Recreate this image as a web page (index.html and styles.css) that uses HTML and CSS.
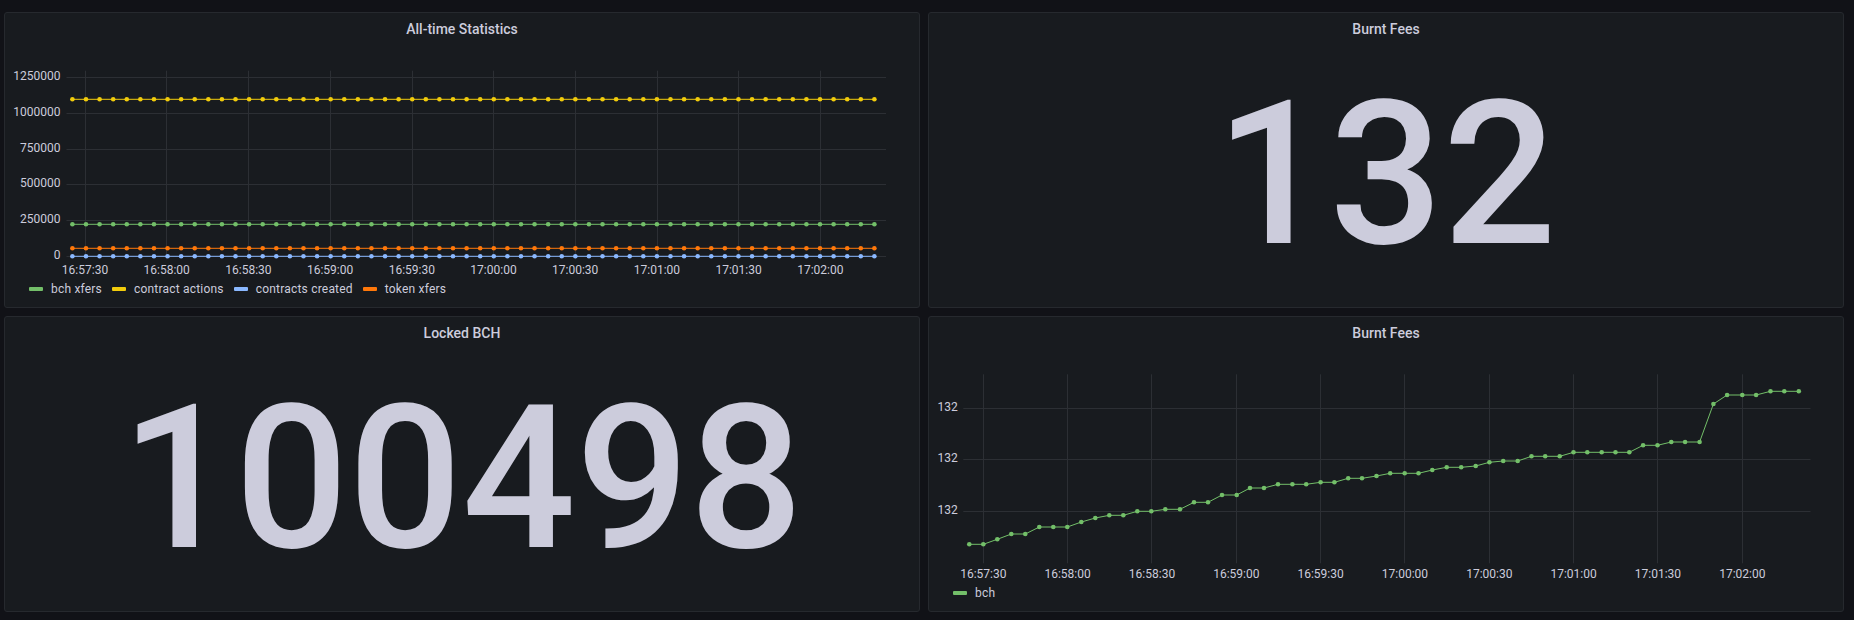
FILE: index.html
```html
<!DOCTYPE html>
<html lang="en">
<head>
<meta charset="utf-8">
<title>Dashboard</title>
<link rel="stylesheet" href="styles.css">
</head>
<body>
<main class="dashboard">

  <section class="panel">
    <header class="panel-title">All-time Statistics</header>
    <svg class="chart" width="914" height="235" viewBox="5 45 914 235" xmlns="http://www.w3.org/2000/svg">
      <defs>
        <marker id="m-green" markerUnits="userSpaceOnUse" markerWidth="6" markerHeight="6" refX="3" refY="3" viewBox="0 0 6 6"><circle cx="3" cy="3" r="2.3" fill="#73bf69"/></marker>
        <marker id="m-yellow" markerUnits="userSpaceOnUse" markerWidth="6" markerHeight="6" refX="3" refY="3" viewBox="0 0 6 6"><circle cx="3" cy="3" r="2.3" fill="#f2cc0c"/></marker>
        <marker id="m-blue" markerUnits="userSpaceOnUse" markerWidth="6" markerHeight="6" refX="3" refY="3" viewBox="0 0 6 6"><circle cx="3" cy="3" r="2.3" fill="#8ab8ff"/></marker>
        <marker id="m-orange" markerUnits="userSpaceOnUse" markerWidth="6" markerHeight="6" refX="3" refY="3" viewBox="0 0 6 6"><circle cx="3" cy="3" r="2.3" fill="#ff780a"/></marker>
      </defs>
      <path class="grid" d="M66.5 77.5H886M66.5 113.5H886M66.5 149.5H886M66.5 184.5H886M66.5 220.5H886M66.5 256.5H886M85.5 70.7V259.3M166.5 70.7V259.3M248.5 70.7V259.3M330.5 70.7V259.3M412.5 70.7V259.3M493.5 70.7V259.3M575.5 70.7V259.3M657.5 70.7V259.3M738.5 70.7V259.3M820.5 70.7V259.3"/>
      <g class="ylabels">
        <text x="60.5" y="80">1250000</text>
        <text x="60.5" y="116">1000000</text>
        <text x="60.5" y="152">750000</text>
        <text x="60.5" y="187">500000</text>
        <text x="60.5" y="223">250000</text>
        <text x="60.5" y="259">0</text>
      </g>
      <g class="xlabels">
        <text x="85" y="273.6">16:57:30</text>
        <text x="166.7" y="273.6">16:58:00</text>
        <text x="248.4" y="273.6">16:58:30</text>
        <text x="330.1" y="273.6">16:59:00</text>
        <text x="411.8" y="273.6">16:59:30</text>
        <text x="493.5" y="273.6">17:00:00</text>
        <text x="575.2" y="273.6">17:00:30</text>
        <text x="656.9" y="273.6">17:01:00</text>
        <text x="738.6" y="273.6">17:01:30</text>
        <text x="820.3" y="273.6">17:02:00</text>
      </g>
      <path class="series s-green" d="M72.4 224.3h13.593h13.593h13.593h13.593h13.593h13.593h13.593h13.593h13.593h13.593h13.593h13.593h13.593h13.593h13.593h13.593h13.593h13.593h13.593h13.593h13.593h13.593h13.593h13.593h13.593h13.593h13.593h13.593h13.593h13.593h13.593h13.593h13.593h13.593h13.593h13.593h13.593h13.593h13.593h13.593h13.593h13.593h13.593h13.593h13.593h13.593h13.593h13.593h13.593h13.593h13.593h13.593h13.593h13.593h13.593h13.593h13.593h13.593h13.593"/>
      <path class="series s-yellow" d="M72.4 99.3h13.593h13.593h13.593h13.593h13.593h13.593h13.593h13.593h13.593h13.593h13.593h13.593h13.593h13.593h13.593h13.593h13.593h13.593h13.593h13.593h13.593h13.593h13.593h13.593h13.593h13.593h13.593h13.593h13.593h13.593h13.593h13.593h13.593h13.593h13.593h13.593h13.593h13.593h13.593h13.593h13.593h13.593h13.593h13.593h13.593h13.593h13.593h13.593h13.593h13.593h13.593h13.593h13.593h13.593h13.593h13.593h13.593h13.593h13.593"/>
      <path class="series s-blue" d="M72.4 256.3h13.593h13.593h13.593h13.593h13.593h13.593h13.593h13.593h13.593h13.593h13.593h13.593h13.593h13.593h13.593h13.593h13.593h13.593h13.593h13.593h13.593h13.593h13.593h13.593h13.593h13.593h13.593h13.593h13.593h13.593h13.593h13.593h13.593h13.593h13.593h13.593h13.593h13.593h13.593h13.593h13.593h13.593h13.593h13.593h13.593h13.593h13.593h13.593h13.593h13.593h13.593h13.593h13.593h13.593h13.593h13.593h13.593h13.593h13.593"/>
      <path class="series s-orange" d="M72.4 248.3h13.593h13.593h13.593h13.593h13.593h13.593h13.593h13.593h13.593h13.593h13.593h13.593h13.593h13.593h13.593h13.593h13.593h13.593h13.593h13.593h13.593h13.593h13.593h13.593h13.593h13.593h13.593h13.593h13.593h13.593h13.593h13.593h13.593h13.593h13.593h13.593h13.593h13.593h13.593h13.593h13.593h13.593h13.593h13.593h13.593h13.593h13.593h13.593h13.593h13.593h13.593h13.593h13.593h13.593h13.593h13.593h13.593h13.593h13.593"/>
    </svg>
    <div class="legend">
      <span class="legend-item"><i class="swatch sw-green"></i>bch xfers</span>
      <span class="legend-item"><i class="swatch sw-yellow"></i>contract actions</span>
      <span class="legend-item"><i class="swatch sw-blue"></i>contracts created</span>
      <span class="legend-item"><i class="swatch sw-orange"></i>token xfers</span>
    </div>
  </section>

  <section class="panel">
    <header class="panel-title">Burnt Fees</header>
    <div class="stat-value">132</div>
  </section>

  <section class="panel">
    <header class="panel-title">Locked BCH</header>
    <div class="stat-value">100498</div>
  </section>

  <section class="panel">
    <header class="panel-title">Burnt Fees</header>
    <svg class="chart" width="914" height="235" viewBox="929 349 914 235" xmlns="http://www.w3.org/2000/svg">
      <path class="grid" d="M963.3 408.5H1810.5M963.3 459.5H1810.5M963.3 511.5H1810.5M983.5 374.3V563.3M1067.5 374.3V563.3M1151.5 374.3V563.3M1236.5 374.3V563.3M1320.5 374.3V563.3M1404.5 374.3V563.3M1489.5 374.3V563.3M1573.5 374.3V563.3M1657.5 374.3V563.3M1742.5 374.3V563.3"/>
      <g class="ylabels">
        <text x="957.7" y="411">132</text>
        <text x="957.7" y="462.3">132</text>
        <text x="957.7" y="514">132</text>
      </g>
      <g class="xlabels">
        <text x="983.3" y="577.6">16:57:30</text>
        <text x="1067.6" y="577.6">16:58:00</text>
        <text x="1152" y="577.6">16:58:30</text>
        <text x="1236.3" y="577.6">16:59:00</text>
        <text x="1320.6" y="577.6">16:59:30</text>
        <text x="1404.9" y="577.6">17:00:00</text>
        <text x="1489.3" y="577.6">17:00:30</text>
        <text x="1573.6" y="577.6">17:01:00</text>
        <text x="1657.9" y="577.6">17:01:30</text>
        <text x="1742.3" y="577.6">17:02:00</text>
      </g>
      <polyline class="series s-green" points="969.3,544.3 983.3,544.3 997.3,539.3 1011.3,534 1025.3,534 1039.3,527 1053.3,527 1067.3,527 1081.3,522 1095.3,518 1109.3,515.3 1123.3,515.3 1137.3,511.3 1151.3,511.3 1165.3,509.3 1180,509.3 1194,502.3 1208,502.3 1222,495 1236.7,495 1250,488 1264,488 1278,484.3 1292.4,484.3 1306.2,484.3 1320.6,482.3 1334.4,482.3 1348.2,478.3 1362,478.3 1376.5,476 1390.2,473.3 1404.7,473.3 1418.5,473.3 1432.3,470 1446.7,467.3 1461.2,467.3 1475.7,466 1489.4,462.3 1503.2,461 1517.7,461 1531.5,456.3 1545.2,456.3 1559.7,456.3 1573.5,452.3 1587.3,452.3 1601.7,452.3 1615.5,452.3 1629.3,452.3 1643.1,445.3 1657.5,445.3 1671.3,442 1685.1,442 1699.6,442 1713.4,404 1727.1,395 1742.3,395 1756.1,395 1770.5,391.3 1784.3,391.3 1798.8,391.3"/>
    </svg>
    <div class="legend">
      <span class="legend-item"><i class="swatch sw-green"></i>bch</span>
    </div>
  </section>

</main>
</body>
</html>
```

FILE: styles.css
```css
html, body {
  margin: 0;
  padding: 0;
  background: #111217;
}

body {
  font-family: Roboto, "Liberation Sans", sans-serif;
  color: #ccccdc;
  overflow: hidden;
}

.dashboard {
  display: grid;
  grid-template-columns: 916px 916px;
  grid-template-rows: 296px 296px;
  gap: 8px;
  padding: 12px 10px 8px 4px;
}

.panel {
  box-sizing: border-box;
  background: #181b1f;
  border: 1px solid #26292e;
  border-radius: 3px;
  display: flex;
  flex-direction: column;
  overflow: hidden;
}

.panel-title {
  flex: none;
  height: 32px;
  line-height: 32px;
  text-align: center;
  font-size: 14px;
  font-weight: 500;
  color: #ccccdc;
}

.chart {
  display: block;
  flex: none;
}

.grid {
  fill: none;
  stroke: #2c2f34;
  stroke-width: 1;
}

.ylabels text,
.xlabels text {
  font-family: Roboto, "Liberation Sans", sans-serif;
  font-size: 12px;
  fill: #ccccdc;
}

.ylabels text {
  text-anchor: end;
}

.xlabels text {
  text-anchor: middle;
}

.series {
  fill: none;
  stroke-width: 1;
}

.s-green { stroke: #73bf69; marker: url(#m-green); }
.s-yellow { stroke: #f2cc0c; marker: url(#m-yellow); }
.s-blue { stroke: #8ab8ff; marker: url(#m-blue); }
.s-orange { stroke: #ff780a; marker: url(#m-orange); }

.legend {
  flex: none;
  height: 18px;
  display: flex;
  align-items: center;
  gap: 10px;
  padding-left: 24px;
  font-size: 12px;
  letter-spacing: 0.2px;
  color: #ccccdc;
}

.legend-item {
  display: flex;
  align-items: center;
  gap: 8px;
  white-space: nowrap;
}

.swatch {
  display: block;
  width: 14px;
  height: 4px;
  border-radius: 1px;
}

.sw-green { background: #73bf69; }
.sw-yellow { background: #f2cc0c; }
.sw-blue { background: #8ab8ff; }
.sw-orange { background: #ff780a; }

.stat-value {
  flex: 1;
  display: flex;
  align-items: center;
  justify-content: center;
  font-size: 200px;
  line-height: 1;
  font-weight: 500;
  color: #ccccdc;
  padding-bottom: 2px;
}
```
